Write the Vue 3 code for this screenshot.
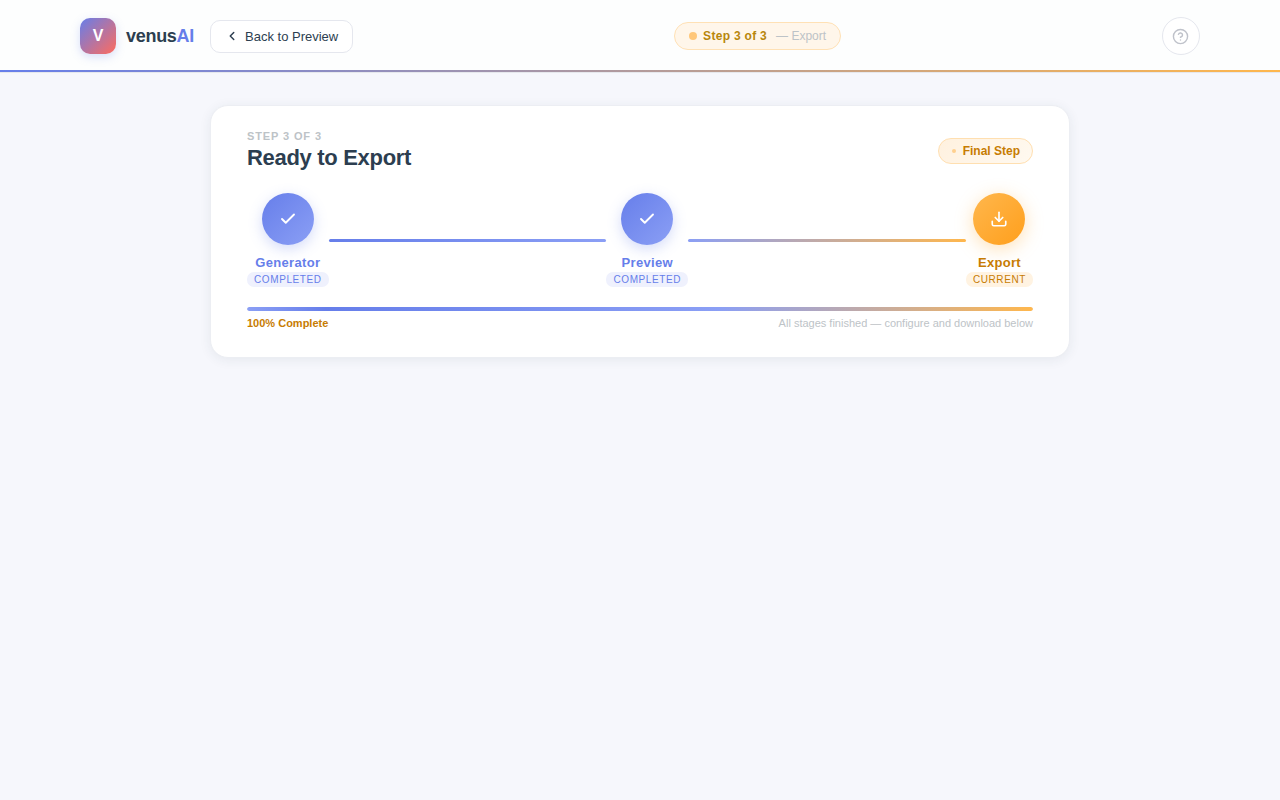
<!-- ExportPage.vue -->
<template>
  <div class="page">
    <header class="header">
      <div class="header-inner">
        <div class="header-left">
          <a href="#" class="brand">
            <span class="brand-mark">V</span>
            <span class="brand-name">venus<span class="accent">AI</span></span>
          </a>
          <button type="button" class="back-btn">
            <svg width="14" height="14" viewBox="0 0 24 24" fill="none" stroke="currentColor" stroke-width="2.5" stroke-linecap="round" stroke-linejoin="round">
              <polyline points="15 18 9 12 15 6" />
            </svg>
            Back to Preview
          </button>
        </div>

        <div class="step-pill">
          <span class="pill-dot"></span>
          <span class="pill-step">Step 3 of 3</span>
          <span class="pill-name">— Export</span>
        </div>

        <button type="button" class="help-btn" aria-label="Help">
          <svg width="17" height="17" viewBox="0 0 24 24" fill="none" stroke="currentColor" stroke-width="2" stroke-linecap="round" stroke-linejoin="round">
            <circle cx="12" cy="12" r="10" />
            <path d="M9.09 9a3 3 0 0 1 5.83 1c0 2-3 3-3 3" />
            <line x1="12" y1="17" x2="12.01" y2="17" />
          </svg>
        </button>
      </div>
      <div class="header-line"></div>
    </header>

    <main class="main">
      <section class="card">
        <div class="card-head">
          <div>
            <p class="eyebrow">Step 3 of 3</p>
            <h1>Ready to Export</h1>
          </div>
          <span class="final-badge"><span class="final-dot"></span>Final Step</span>
        </div>

        <div class="stepper">
          <template v-for="(step, i) in steps" :key="step.label">
            <div v-if="i > 0" class="connector" :class="{ last: i === steps.length - 1 }"></div>
            <div class="step" :class="step.state">
              <div class="step-circle">
                <svg v-if="step.state === 'completed'" width="18" height="18" viewBox="0 0 24 24" fill="none" stroke="currentColor" stroke-width="2.5" stroke-linecap="round" stroke-linejoin="round">
                  <polyline points="20 6 9 17 4 12" />
                </svg>
                <svg v-else width="18" height="18" viewBox="0 0 24 24" fill="none" stroke="currentColor" stroke-width="2.2" stroke-linecap="round" stroke-linejoin="round">
                  <path d="M21 15v4a2 2 0 0 1-2 2H5a2 2 0 0 1-2-2v-4" />
                  <polyline points="7 10 12 15 17 10" />
                  <line x1="12" y1="15" x2="12" y2="3" />
                </svg>
              </div>
              <span class="step-label">{{ step.label }}</span>
              <span class="step-state">{{ step.state }}</span>
            </div>
          </template>
        </div>

        <div class="track">
          <div class="track-fill" :style="{ width: progress + '%' }"></div>
        </div>
        <div class="track-info">
          <span class="track-percent">{{ progress }}% Complete</span>
          <span>All stages finished — configure and download below</span>
        </div>
      </section>
    </main>
  </div>
</template>

<script setup>
import { ref } from 'vue';

const progress = ref(100);

const steps = [
  { label: 'Generator', state: 'completed' },
  { label: 'Preview', state: 'completed' },
  { label: 'Export', state: 'current' }
];
</script>

<style>
body {
  background: #f6f7fc;
}
</style>

<style scoped>
.page {
  min-height: 100vh;
  font-family: "Liberation Sans", Arial, sans-serif;
  color: #2c3e50;
}

.page * {
  box-sizing: border-box;
}

/* Header */
.header {
  background: #fdfefe;
  border-bottom: 1px solid #e6e8ed;
}

.header-inner {
  display: flex;
  align-items: center;
  justify-content: space-between;
  max-width: 1200px;
  height: 70px;
  margin: 0 auto;
  padding: 2px 40px 0;
}

.header-line {
  height: 2px;
  background: linear-gradient(90deg, #667eea, #ffb74d);
}

.header-left {
  display: flex;
  align-items: center;
  gap: 16px;
}

.brand {
  display: flex;
  align-items: center;
  gap: 10px;
  color: inherit;
  text-decoration: none;
}

.brand-mark {
  display: flex;
  align-items: center;
  justify-content: center;
  width: 36px;
  height: 36px;
  border-radius: 10px;
  background: linear-gradient(135deg, #667eea, #ff6b5e);
  box-shadow: 0 3px 10px rgba(102, 126, 234, 0.25);
  color: #fff;
  font-size: 16px;
  font-weight: 700;
}

.brand-name {
  font-size: 18px;
  font-weight: 700;
  letter-spacing: -0.016em;
}

.accent {
  color: #667eea;
}

.back-btn {
  display: flex;
  align-items: center;
  gap: 6px;
  height: 33px;
  padding: 0 14px;
  border: 1px solid #e5e7ee;
  border-radius: 10px;
  background: #fff;
  color: #2c3e50;
  font-family: inherit;
  font-size: 13px;
  cursor: pointer;
}

.step-pill {
  display: flex;
  align-items: center;
  gap: 6px;
  height: 28px;
  padding: 0 14px;
  border: 1px solid #ffe1b5;
  border-radius: 14px;
  background: #fff6ea;
  font-size: 12px;
}

.pill-dot {
  width: 8px;
  height: 8px;
  border-radius: 50%;
  background: #ffc779;
}

.pill-step {
  color: #b8860b;
  font-weight: 700;
  letter-spacing: 0.025em;
}

.pill-name {
  margin-left: 3px;
  color: #bdc3c7;
}

.help-btn {
  display: flex;
  align-items: center;
  justify-content: center;
  width: 38px;
  height: 38px;
  padding: 0;
  border: 1px solid #e5e7ee;
  border-radius: 50%;
  background: #fff;
  color: #bfc2ca;
  cursor: pointer;
}

/* Card */
.main {
  max-width: 940px;
  margin: 0 auto;
  padding: 32px 40px;
}

.card {
  padding: 24px 36px 27px;
  border: 1px solid #eceef3;
  border-radius: 18px;
  background: #fff;
  box-shadow: 0 2px 12px rgba(44, 62, 80, 0.08);
}

.card-head {
  display: flex;
  align-items: center;
  justify-content: space-between;
  margin-bottom: 22px;
}

.eyebrow {
  margin: 0 0 2px;
  color: #bdc3c7;
  font-size: 11px;
  font-weight: 700;
  line-height: 13px;
  letter-spacing: 0.08em;
  text-transform: uppercase;
}

h1 {
  margin: 0;
  font-size: 22px;
  font-weight: 700;
  line-height: 26px;
  letter-spacing: -0.014em;
}

.final-badge {
  display: flex;
  align-items: center;
  gap: 7px;
  height: 26px;
  padding: 0 12px 0 13px;
  border: 1px solid #ffdfb0;
  border-radius: 13px;
  background: linear-gradient(135deg, #fff1df, #fff9f0);
  color: #c77c02;
  font-size: 12px;
  font-weight: 700;
}

.final-dot {
  width: 4px;
  height: 4px;
  border-radius: 50%;
  background: #ffd08e;
}

/* Stepper */
.stepper {
  display: flex;
  align-items: center;
  margin-bottom: 20px;
}

.step {
  display: flex;
  flex-direction: column;
  align-items: center;
}

.step-circle {
  display: flex;
  align-items: center;
  justify-content: center;
  width: 52px;
  height: 52px;
  margin-bottom: 10px;
  border-radius: 50%;
  color: #fff;
}

.completed .step-circle {
  background: linear-gradient(135deg, #667eea, #8b9ff5);
  box-shadow: 0 4px 14px rgba(102, 126, 234, 0.28);
}

.current .step-circle {
  background: linear-gradient(135deg, #ffb74d, #ff9f1c);
  box-shadow: 0 4px 18px rgba(255, 183, 77, 0.4);
}

.step-label {
  margin-bottom: 2px;
  font-size: 13px;
  font-weight: 700;
  line-height: 15px;
  letter-spacing: 0.025em;
}

.step-state {
  padding: 2px 7px;
  border-radius: 7px;
  font-size: 10px;
  line-height: 11px;
  letter-spacing: 0.06em;
  text-transform: uppercase;
}

.completed {
  color: #667eea;
}

.completed .step-state {
  background: #eff1fd;
}

.current {
  color: #c77c02;
}

.current .step-state {
  background: #fff3e2;
}

.connector {
  flex: 1;
  height: 3px;
  border-radius: 2px;
  background: linear-gradient(90deg, #667eea, #8b9ff5);
}

.connector.last {
  background: linear-gradient(90deg, #8b9ff5, #ffb74d);
}

/* Progress */
.track {
  height: 4px;
  border-radius: 2px;
  background: #eef0f6;
  overflow: hidden;
}

.track-fill {
  height: 100%;
  border-radius: 2px;
  background: linear-gradient(90deg, #8b9ff5, #667eea 10%, #8b9ff5 60%, #ffb74d);
}

.track-info {
  display: flex;
  justify-content: space-between;
  margin-top: 6px;
  color: #bdc3c7;
  font-size: 11px;
  line-height: 13px;
}

.track-percent {
  color: #c77c02;
  font-weight: 700;
}
</style>
